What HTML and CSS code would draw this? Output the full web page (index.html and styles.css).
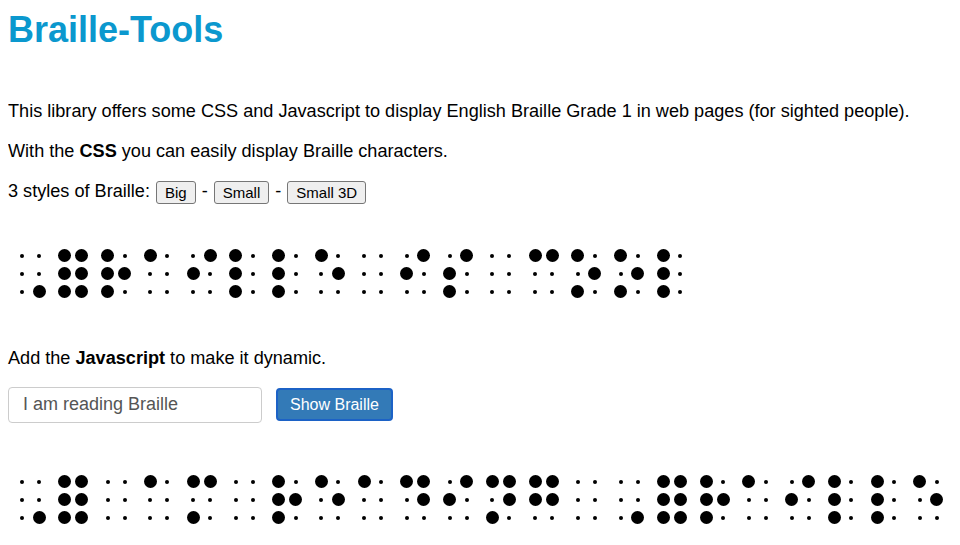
FILE: index.html
```html
<!DOCTYPE html>
<html lang="en">
<head>
<meta charset="utf-8">
<title>Braille-Tools</title>
<link rel="stylesheet" href="styles.css">
</head>
<body>
<h1 class="title">Braille-Tools</h1>
<p class="text">This library offers some CSS and Javascript to display English Braille Grade 1 in web pages (for sighted people).</p>
<p class="text">With the <b>CSS</b> you can easily display Braille characters.</p>
<p class="text styles">3 styles of Braille: <button class="style-btn">Big</button> - <button class="style-btn">Small</button> - <button class="style-btn">Small 3D</button></p>

<div class="braille braille-css">
<span class="cell"><i></i><i></i><i></i><i></i><i></i><i class="on"></i></span>
<span class="cell"><i class="on"></i><i class="on"></i><i class="on"></i><i class="on"></i><i class="on"></i><i class="on"></i></span>
<span class="cell"><i class="on"></i><i class="on"></i><i class="on"></i><i></i><i class="on"></i><i></i></span>
<span class="cell"><i class="on"></i><i></i><i></i><i></i><i></i><i></i></span>
<span class="cell"><i></i><i class="on"></i><i></i><i class="on"></i><i></i><i></i></span>
<span class="cell"><i class="on"></i><i class="on"></i><i class="on"></i><i></i><i></i><i></i></span>
<span class="cell"><i class="on"></i><i class="on"></i><i class="on"></i><i></i><i></i><i></i></span>
<span class="cell"><i class="on"></i><i></i><i></i><i></i><i class="on"></i><i></i></span>
<span class="cell"><i></i><i></i><i></i><i></i><i></i><i></i></span>
<span class="cell"><i></i><i class="on"></i><i></i><i class="on"></i><i></i><i></i></span>
<span class="cell"><i></i><i class="on"></i><i class="on"></i><i class="on"></i><i></i><i></i></span>
<span class="cell"><i></i><i></i><i></i><i></i><i></i><i></i></span>
<span class="cell"><i class="on"></i><i></i><i></i><i class="on"></i><i></i><i></i></span>
<span class="cell"><i class="on"></i><i></i><i class="on"></i><i></i><i class="on"></i><i></i></span>
<span class="cell"><i class="on"></i><i></i><i class="on"></i><i></i><i class="on"></i><i></i></span>
<span class="cell"><i class="on"></i><i class="on"></i><i class="on"></i><i></i><i></i><i></i></span>
</div>

<p class="text">Add the <b>Javascript</b> to make it dynamic.</p>

<div class="form-row">
<input class="text-input" type="text" value="I am reading Braille">
<button class="show-btn">Show Braille</button>
</div>

<div class="braille braille-js">
<span class="cell"><i></i><i></i><i></i><i></i><i></i><i class="on"></i></span>
<span class="cell"><i class="on"></i><i class="on"></i><i class="on"></i><i class="on"></i><i class="on"></i><i class="on"></i></span>
<span class="cell"><i></i><i></i><i></i><i></i><i></i><i></i></span>
<span class="cell"><i class="on"></i><i></i><i></i><i></i><i></i><i></i></span>
<span class="cell"><i class="on"></i><i></i><i class="on"></i><i class="on"></i><i></i><i></i></span>
<span class="cell"><i></i><i></i><i></i><i></i><i></i><i></i></span>
<span class="cell"><i class="on"></i><i class="on"></i><i class="on"></i><i></i><i class="on"></i><i></i></span>
<span class="cell"><i class="on"></i><i></i><i></i><i></i><i class="on"></i><i></i></span>
<span class="cell"><i class="on"></i><i></i><i></i><i></i><i></i><i></i></span>
<span class="cell"><i class="on"></i><i></i><i></i><i class="on"></i><i class="on"></i><i></i></span>
<span class="cell"><i></i><i class="on"></i><i></i><i class="on"></i><i></i><i></i></span>
<span class="cell"><i class="on"></i><i></i><i class="on"></i><i class="on"></i><i class="on"></i><i></i></span>
<span class="cell"><i class="on"></i><i class="on"></i><i></i><i class="on"></i><i class="on"></i><i></i></span>
<span class="cell"><i></i><i></i><i></i><i></i><i></i><i></i></span>
<span class="cell"><i></i><i></i><i></i><i></i><i></i><i class="on"></i></span>
<span class="cell"><i class="on"></i><i class="on"></i><i class="on"></i><i class="on"></i><i class="on"></i><i class="on"></i></span>
<span class="cell"><i class="on"></i><i class="on"></i><i class="on"></i><i></i><i class="on"></i><i></i></span>
<span class="cell"><i class="on"></i><i></i><i></i><i></i><i></i><i></i></span>
<span class="cell"><i></i><i class="on"></i><i></i><i class="on"></i><i></i><i></i></span>
<span class="cell"><i class="on"></i><i class="on"></i><i class="on"></i><i></i><i></i><i></i></span>
<span class="cell"><i class="on"></i><i class="on"></i><i class="on"></i><i></i><i></i><i></i></span>
<span class="cell"><i class="on"></i><i></i><i></i><i></i><i class="on"></i><i></i></span>
</div>
</body>
</html>
```

FILE: styles.css
```css
html, body {
  background: #fff;
}

body {
  margin: 8px;
  font-family: "Liberation Sans", Arial, Helvetica, sans-serif;
  font-size: 18.12px;
  line-height: 22px;
  color: #000;
}

.title {
  margin: 0 0 48px;
  font-size: 36px;
  line-height: 44px;
  font-weight: bold;
  color: #0b98ce;
}

.text {
  margin: 18px 0;
}

.styles {
  margin-top: 17px;
  white-space: nowrap;
}

.style-btn {
  font-family: "Liberation Sans", Arial, Helvetica, sans-serif;
  font-size: 15px;
  line-height: 17px;
  padding: 2px 8px;
  margin: 0 1px;
  color: #000;
  background: #efefef;
  border: 1px solid #767676;
  border-radius: 3px;
  vertical-align: middle;
}

.braille {
  display: flex;
  flex-wrap: nowrap;
}

.braille-css {
  margin: 43px 0 46px;
}

.braille-js {
  margin: 50px 0 0;
}

.cell {
  flex: 0 0 42.75px;
  display: grid;
  grid-template-columns: 17px 17px;
  grid-template-rows: 18px 18px 18px;
  grid-auto-flow: column;
  padding-left: 5.5px;
  box-sizing: border-box;
}

.cell i {
  display: block;
  place-self: center;
  width: 4px;
  height: 4px;
  border-radius: 50%;
  background: #000;
}

.cell i.on {
  width: 13px;
  height: 13px;
}

.form-row {
  display: flex;
  align-items: center;
  gap: 14px;
  margin-top: 18px;
}

.text-input {
  box-sizing: border-box;
  width: 254px;
  height: 36px;
  padding: 0 14px;
  font-family: "Liberation Sans", Arial, Helvetica, sans-serif;
  font-size: 18px;
  color: #555;
  background: #fff;
  border: 1px solid #ccc;
  border-radius: 4px;
  outline: none;
}

.show-btn {
  box-sizing: border-box;
  height: 33px;
  padding: 0 12px;
  font-family: "Liberation Sans", Arial, Helvetica, sans-serif;
  font-size: 16px;
  color: #fff;
  background: #337ab7;
  border: 2px solid #1c62c6;
  border-radius: 4px;
}
```
